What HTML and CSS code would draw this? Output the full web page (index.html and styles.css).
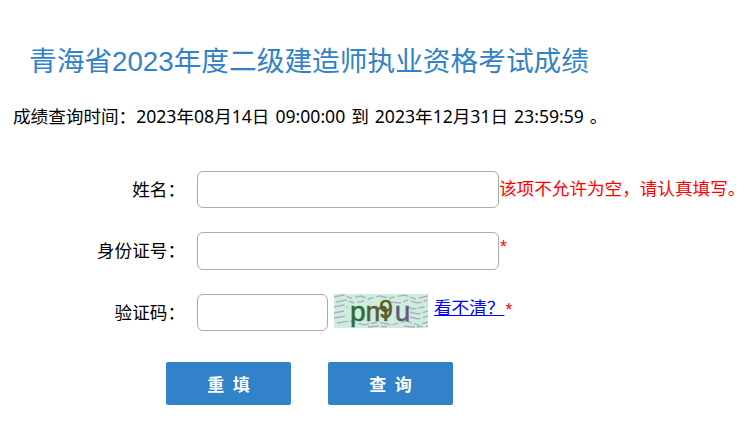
FILE: index.html
```html
<!DOCTYPE html>
<html lang="zh-CN">
<head>
<meta charset="utf-8">
<title>成绩查询</title>
<link rel="stylesheet" href="styles.css">
</head>
<body>
<h1 class="title">青海省2023年度二级建造师执业资格考试成绩</h1>
<p class="period">成绩查询时间：2023年08月14日 09:00:00 到 2023年12月31日 23:59:59 。</p>
<form class="form">
  <div class="row row-name">
    <label class="label">姓名：</label>
    <input class="input input-wide" type="text">
    <span class="error">该项不允许为空，请认真填写。</span>
  </div>
  <div class="row row-id">
    <label class="label">身份证号：</label>
    <input class="input input-wide" type="text">
    <span class="star star-id">*</span>
  </div>
  <div class="row row-code">
    <label class="label">验证码：</label>
    <input class="input input-code" type="text">
    <svg class="captcha" width="94" height="34" viewBox="0 0 94 34">
      <rect width="94" height="34" fill="#cdeedd"/>
      <g class="cap-noise">
        <path d="M0 3 9 1 17 4 27 2 35 5 45 2 56 4 70 1 82 5 94 2"/>
        <path d="M2 8 12 6 20 9 30 7M56 8 66 9 74 6 84 9 94 6"/>
        <path d="M0 13 9 11 14 14M72 13 80 15 94 12"/>
        <path d="M0 19 10 17M76 18 84 20 94 17"/>
        <path d="M0 24 12 22M76 23 84 25 94 22"/>
        <path d="M3 29 16 27 30 31 44 28 58 31 72 27 84 31 94 28"/>
        <path d="M34 33 44 32 56 33M70 32 80 33 94 32"/>
      </g>
      <text class="cap-text" x="16" y="26.5"><tspan class="cap-p">p</tspan><tspan class="cap-m">m</tspan><tspan class="cap-9" dx="-10" dy="-2.5">9</tspan><tspan class="cap-u" dx="2" dy="2.5">u</tspan></text>
    </svg>
    <a class="refresh" href="#">看不清？</a>
    <span class="star star-code">*</span>
  </div>
  <div class="actions">
    <button class="btn" type="reset">重 填</button>
    <button class="btn" type="button">查 询</button>
  </div>
</form>
</body>
</html>
```
FILE: styles.css
```css
* { box-sizing: border-box; }
html, body { margin: 0; padding: 0; }
body {
  width: 751px;
  height: 429px;
  overflow: hidden;
  background: #fff;
  color: #000;
  font-family: "Noto Sans", "Noto Sans CJK SC", sans-serif;
  font-size: 17.6px;
}
.title {
  margin: 0;
  padding: 42px 0 0 29px;
  font-family: "Liberation Sans", "Noto Sans CJK SC", sans-serif;
  font-size: 27.7px;
  line-height: 40px;
  font-weight: 400;
  color: #3182c8;
}
.period {
  margin: 0;
  padding: 22px 0 0 13px;
  line-height: 24px;
  white-space: nowrap;
  word-spacing: 1.4px;
}
.form {
  display: flex;
  flex-direction: column;
  padding-top: 43px;
}
.row {
  display: flex;
  align-items: flex-start;
  height: 38px;
  margin-bottom: 23px;
}
.row-code { margin-top: 1px; margin-bottom: 30px; }
.label {
  width: 197px;
  padding: 5px 12px 0 0;
  text-align: right;
  line-height: 26px;
  white-space: nowrap;
}
.input {
  height: 37px;
  padding: 0 8px;
  background: #fff;
  border: 1px solid #aaa;
  border-radius: 6px;
  outline: none;
}
.row-id .input { height: 38px; }
.input-wide { width: 302px; }
.input-code { width: 131px; }
.error {
  padding-top: 5px;
  color: #f00;
  line-height: 24px;
  white-space: nowrap;
}
.star {
  color: #f00;
  font-family: "Liberation Sans", sans-serif;
  line-height: 24px;
}
.star-id { padding: 3px 0 0 1px; }
.star-code { padding: 4px 0 0 1px; }
.captcha { flex: none; margin: 0 0 0 6px; }
.cap-noise {
  fill: none;
  stroke: #b4aec4;
  stroke-width: 1.4;
  stroke-dasharray: 11 2 6 3;
}
.cap-text {
  font-family: "Liberation Sans", sans-serif;
  font-size: 28px;
  stroke-width: 0.5px;
}
.cap-p { fill: #2f6b34; stroke: #2f6b34; }
.cap-m { fill: #5d5a2e; stroke: #5d5a2e; }
.cap-9 { fill: #5c5a28; stroke: #5c5a28; font-size: 25px; }
.cap-u { fill: #5f5a78; stroke: #5f5a78; }
.refresh {
  margin: 1px 0 0 6px;
  color: #00f;
  line-height: 24px;
  text-decoration: underline;
}
.actions {
  display: flex;
  gap: 37px;
  padding: 0 0 0 166px;
}
.btn {
  width: 125px;
  height: 43px;
  padding: 0;
  border: 0;
  border-radius: 2px;
  background: #3182c8;
  color: #fff;
  font-family: inherit;
  font-size: 17px;
  font-weight: 700;
  word-spacing: 4px;
}
```
